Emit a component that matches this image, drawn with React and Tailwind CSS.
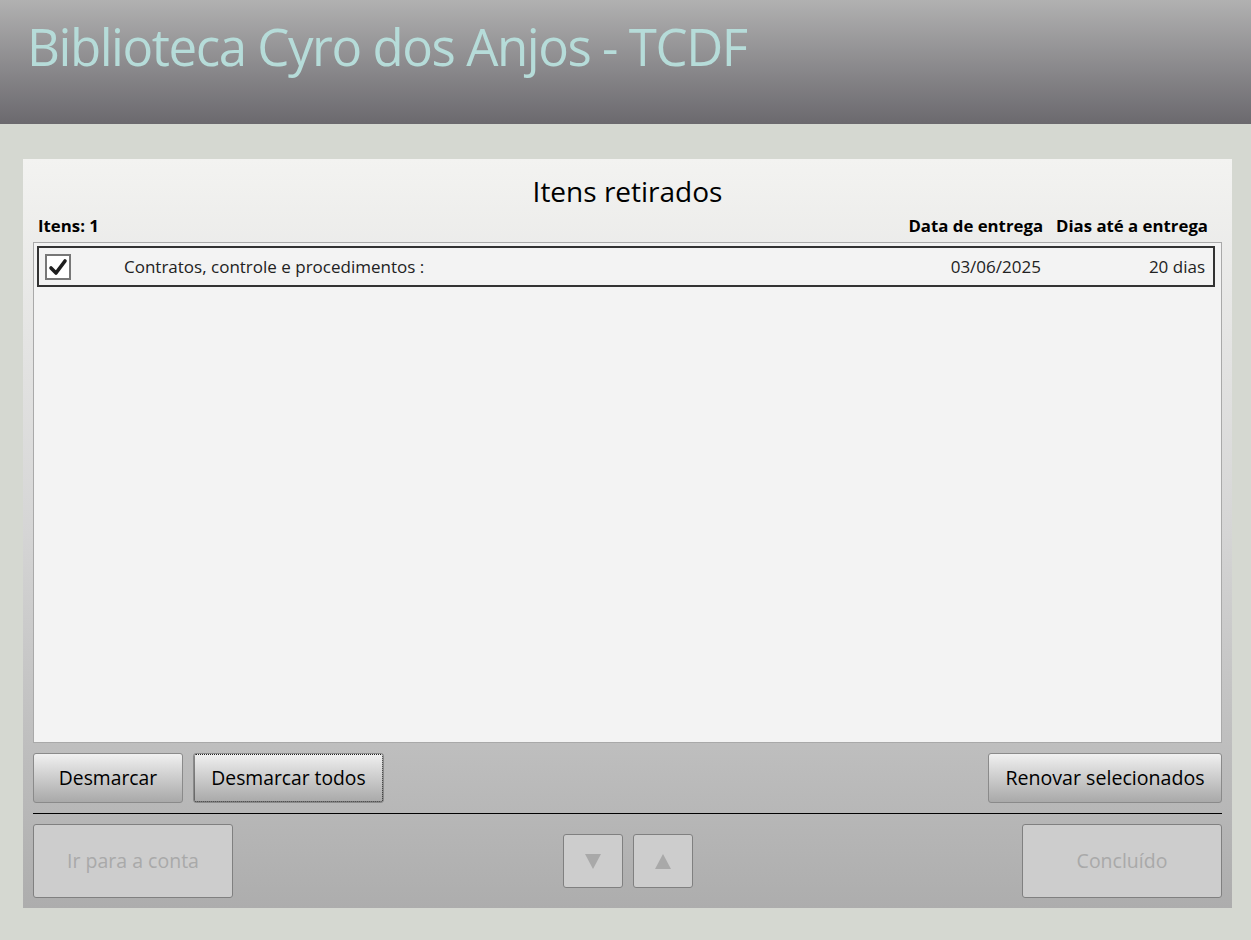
const item = {
  titulo: 'Contratos, controle e procedimentos :',
  entrega: '03/06/2025',
  dias: '20 dias',
}

function Checkbox() {
  return (
    <div className="w-[26px] h-[26px] border-2 border-[#777] bg-white flex items-center justify-center">
      <svg width="22" height="22" viewBox="0 0 22 22">
        <path d="M4 12 L9 17 L18 5" fill="none" stroke="#1e1e1e" strokeWidth="3.6" strokeLinecap="round" strokeLinejoin="round" />
      </svg>
    </div>
  )
}

export default function App() {
  return (
    <div className="w-[1251px] h-[940px] bg-[#d5d8d1] flex flex-col font-['Open_Sans',sans-serif]">
      {/* Cabeçalho */}
      <div className="h-[124px] bg-gradient-to-b from-[#b1b1b1] to-[#6b696e] px-[27px] pt-[12px]">
        <h1 className="text-[51px] leading-[68px] tracking-[-1.45px] text-[#b6dcd9]">Biblioteca Cyro dos Anjos - TCDF</h1>
      </div>

      {/* Painel */}
      <div className="mx-[23px] mt-[35px] w-[1209px] h-[749px] bg-gradient-to-b from-[#f3f3f1] via-[#d5d5d5] to-[#adadad] px-[10px] flex flex-col">
        <h2 className="text-center text-[28px] leading-[38px] mt-[13px] text-black">Itens retirados</h2>
        <div className="flex items-end h-[32px] pb-[4px] text-[16.8px] font-bold text-black">
          <span className="ml-[5px]">Itens: 1</span>
          <span className="ml-auto">Data de entrega</span>
          <span className="ml-[13px] mr-[14px]">Dias até a entrega</span>
        </div>
        <div className="h-[501px] bg-[#f3f3f3] border border-[#a9a9a9] pl-[3px] pr-[6px] pt-[3px]">
          <div className="h-[41px] border-2 border-[#333] flex items-center text-[17px] text-[#222]">
            <div className="ml-[6px]">
              <Checkbox />
            </div>
            <span className="ml-[53px]">{item.titulo}</span>
            <span className="ml-auto">{item.entrega}</span>
            <span className="ml-[108px] mr-[8px]">{item.dias}</span>
          </div>
        </div>

        <div className="flex mt-[10px] gap-[10px]">
          <button className="w-[150px] h-[50px] rounded-[3px] border border-[#8a8a8a] bg-gradient-to-b from-[#f0f0f0] to-[#a9a9a9] text-[19.3px] text-black">Desmarcar</button>
          <button className="w-[191px] h-[50px] rounded-[3px] border border-[#8a8a8a] bg-gradient-to-b from-[#f0f0f0] to-[#a9a9a9] text-[19.3px] text-black outline-1 outline-dotted outline-[#222] -outline-offset-2">Desmarcar todos</button>
          <button className="ml-auto w-[234px] h-[50px] rounded-[3px] border border-[#8a8a8a] bg-gradient-to-b from-[#f0f0f0] to-[#a9a9a9] text-[19.6px] text-black">Renovar selecionados</button>
        </div>

        <div className="mt-[10px] h-px bg-black" />

        <div className="flex mt-[10px] items-start">
          <button className="w-[200px] h-[74px] rounded-[3px] border border-[#808080] bg-[#cdcdcd] text-[19.5px] text-[#a9a9a9]">Ir para a conta</button>
          <div className="ml-[330px] mt-[10px] flex gap-[10px]">
            <button className="w-[60px] h-[54px] rounded-[3px] border border-[#808080] bg-[#cdcdcd] flex items-center justify-center">
              <svg width="18" height="15" viewBox="0 0 18 15"><path d="M1 0 H17 L9 15 Z" fill="#a9a9a9" /></svg>
            </button>
            <button className="w-[60px] h-[54px] rounded-[3px] border border-[#808080] bg-[#cdcdcd] flex items-center justify-center">
              <svg width="18" height="15" viewBox="0 0 18 15"><path d="M1 15 H17 L9 0 Z" fill="#a9a9a9" /></svg>
            </button>
          </div>
          <button className="ml-auto w-[200px] h-[74px] rounded-[3px] border border-[#808080] bg-[#cdcdcd] text-[19.5px] text-[#a9a9a9]">Concluído</button>
        </div>
      </div>
    </div>
  )
}
